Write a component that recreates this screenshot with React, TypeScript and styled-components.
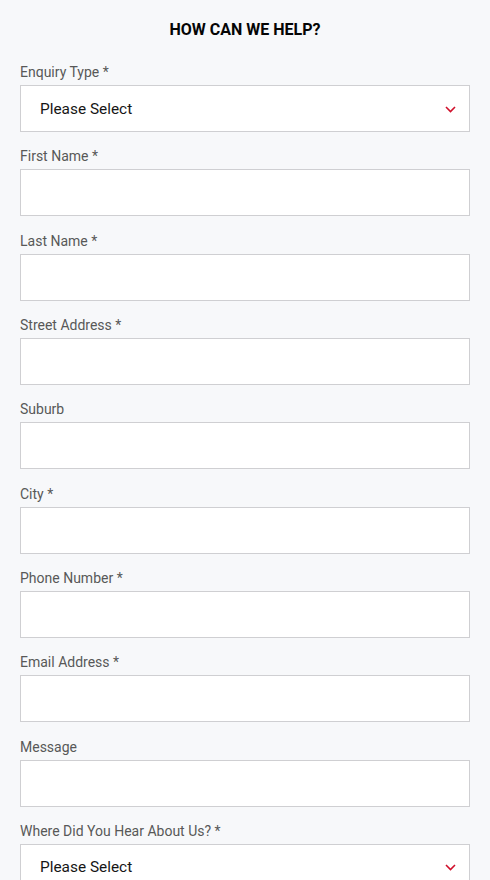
import { createGlobalStyle, styled } from "styled-components";

const GlobalStyle = createGlobalStyle`
  * { box-sizing: border-box; }
  body {
    margin: 0;
    background: #f7f8fa;
    font-family: Roboto, "Liberation Sans", Arial, sans-serif;
  }
`;

const StyledPage = styled.main`
  padding: 20px 20px 0;
  display: flex;
  flex-direction: column;
`;

const StyledTitle = styled.h1`
  margin: 0 0 22px;
  font-size: 16px;
  line-height: 20px;
  font-weight: 700;
  text-align: center;
  color: #050505;
`;

const StyledForm = styled.form`
  display: flex;
  flex-direction: column;
  gap: 14.33px;
`;

const StyledField = styled.label`
  display: flex;
  flex-direction: column;
  gap: 3px;
`;

const StyledLabel = styled.span`
  font-size: 14px;
  line-height: 20px;
  color: #585858;
`;

const StyledInput = styled.input`
  height: 47px;
  width: 100%;
  border: 1px solid #cfcfd2;
  border-radius: 0;
  background: #fff;
  padding: 0 20px;
  font: inherit;
  font-size: 16px;
  outline: none;
`;

const StyledSelectBox = styled.div`
  position: relative;
  height: 47px;
  border: 1px solid #cfcfd2;
  background: #fff;
  display: flex;
  align-items: center;
  padding: 0 19px;
  font-size: 15.4px;
  color: #161616;
`;

const StyledChevron = styled.svg`
  position: absolute;
  right: 13px;
  top: 50%;
  margin-top: -3px;
`;

const Chevron = () => (
  <StyledChevron width="11" height="7" viewBox="0 0 11 7" fill="none">
    <path d="M1 1l4.5 4.5L10 1" stroke="#d0102b" strokeWidth="1.6" />
  </StyledChevron>
);

type FieldProps = { label: string; required?: boolean; select?: boolean };

const Field = ({ label, required, select }: FieldProps) => (
  <StyledField>
    <StyledLabel>
      {label}
      {required && " *"}
    </StyledLabel>
    {select ? (
      <StyledSelectBox>
        Please Select
        <Chevron />
      </StyledSelectBox>
    ) : (
      <StyledInput type="text" />
    )}
  </StyledField>
);

const fields: FieldProps[] = [
  { label: "Enquiry Type", required: true, select: true },
  { label: "First Name", required: true },
  { label: "Last Name", required: true },
  { label: "Street Address", required: true },
  { label: "Suburb" },
  { label: "City", required: true },
  { label: "Phone Number", required: true },
  { label: "Email Address", required: true },
  { label: "Message" },
  { label: "Where Did You Hear About Us?", required: true, select: true },
];

export default function App() {
  return (
    <>
      <GlobalStyle />
      <StyledPage>
        <StyledTitle>HOW CAN WE HELP?</StyledTitle>
        <StyledForm onSubmit={(e) => e.preventDefault()}>
          {fields.map((f) => (
            <Field key={f.label} {...f} />
          ))}
        </StyledForm>
      </StyledPage>
    </>
  );
}
